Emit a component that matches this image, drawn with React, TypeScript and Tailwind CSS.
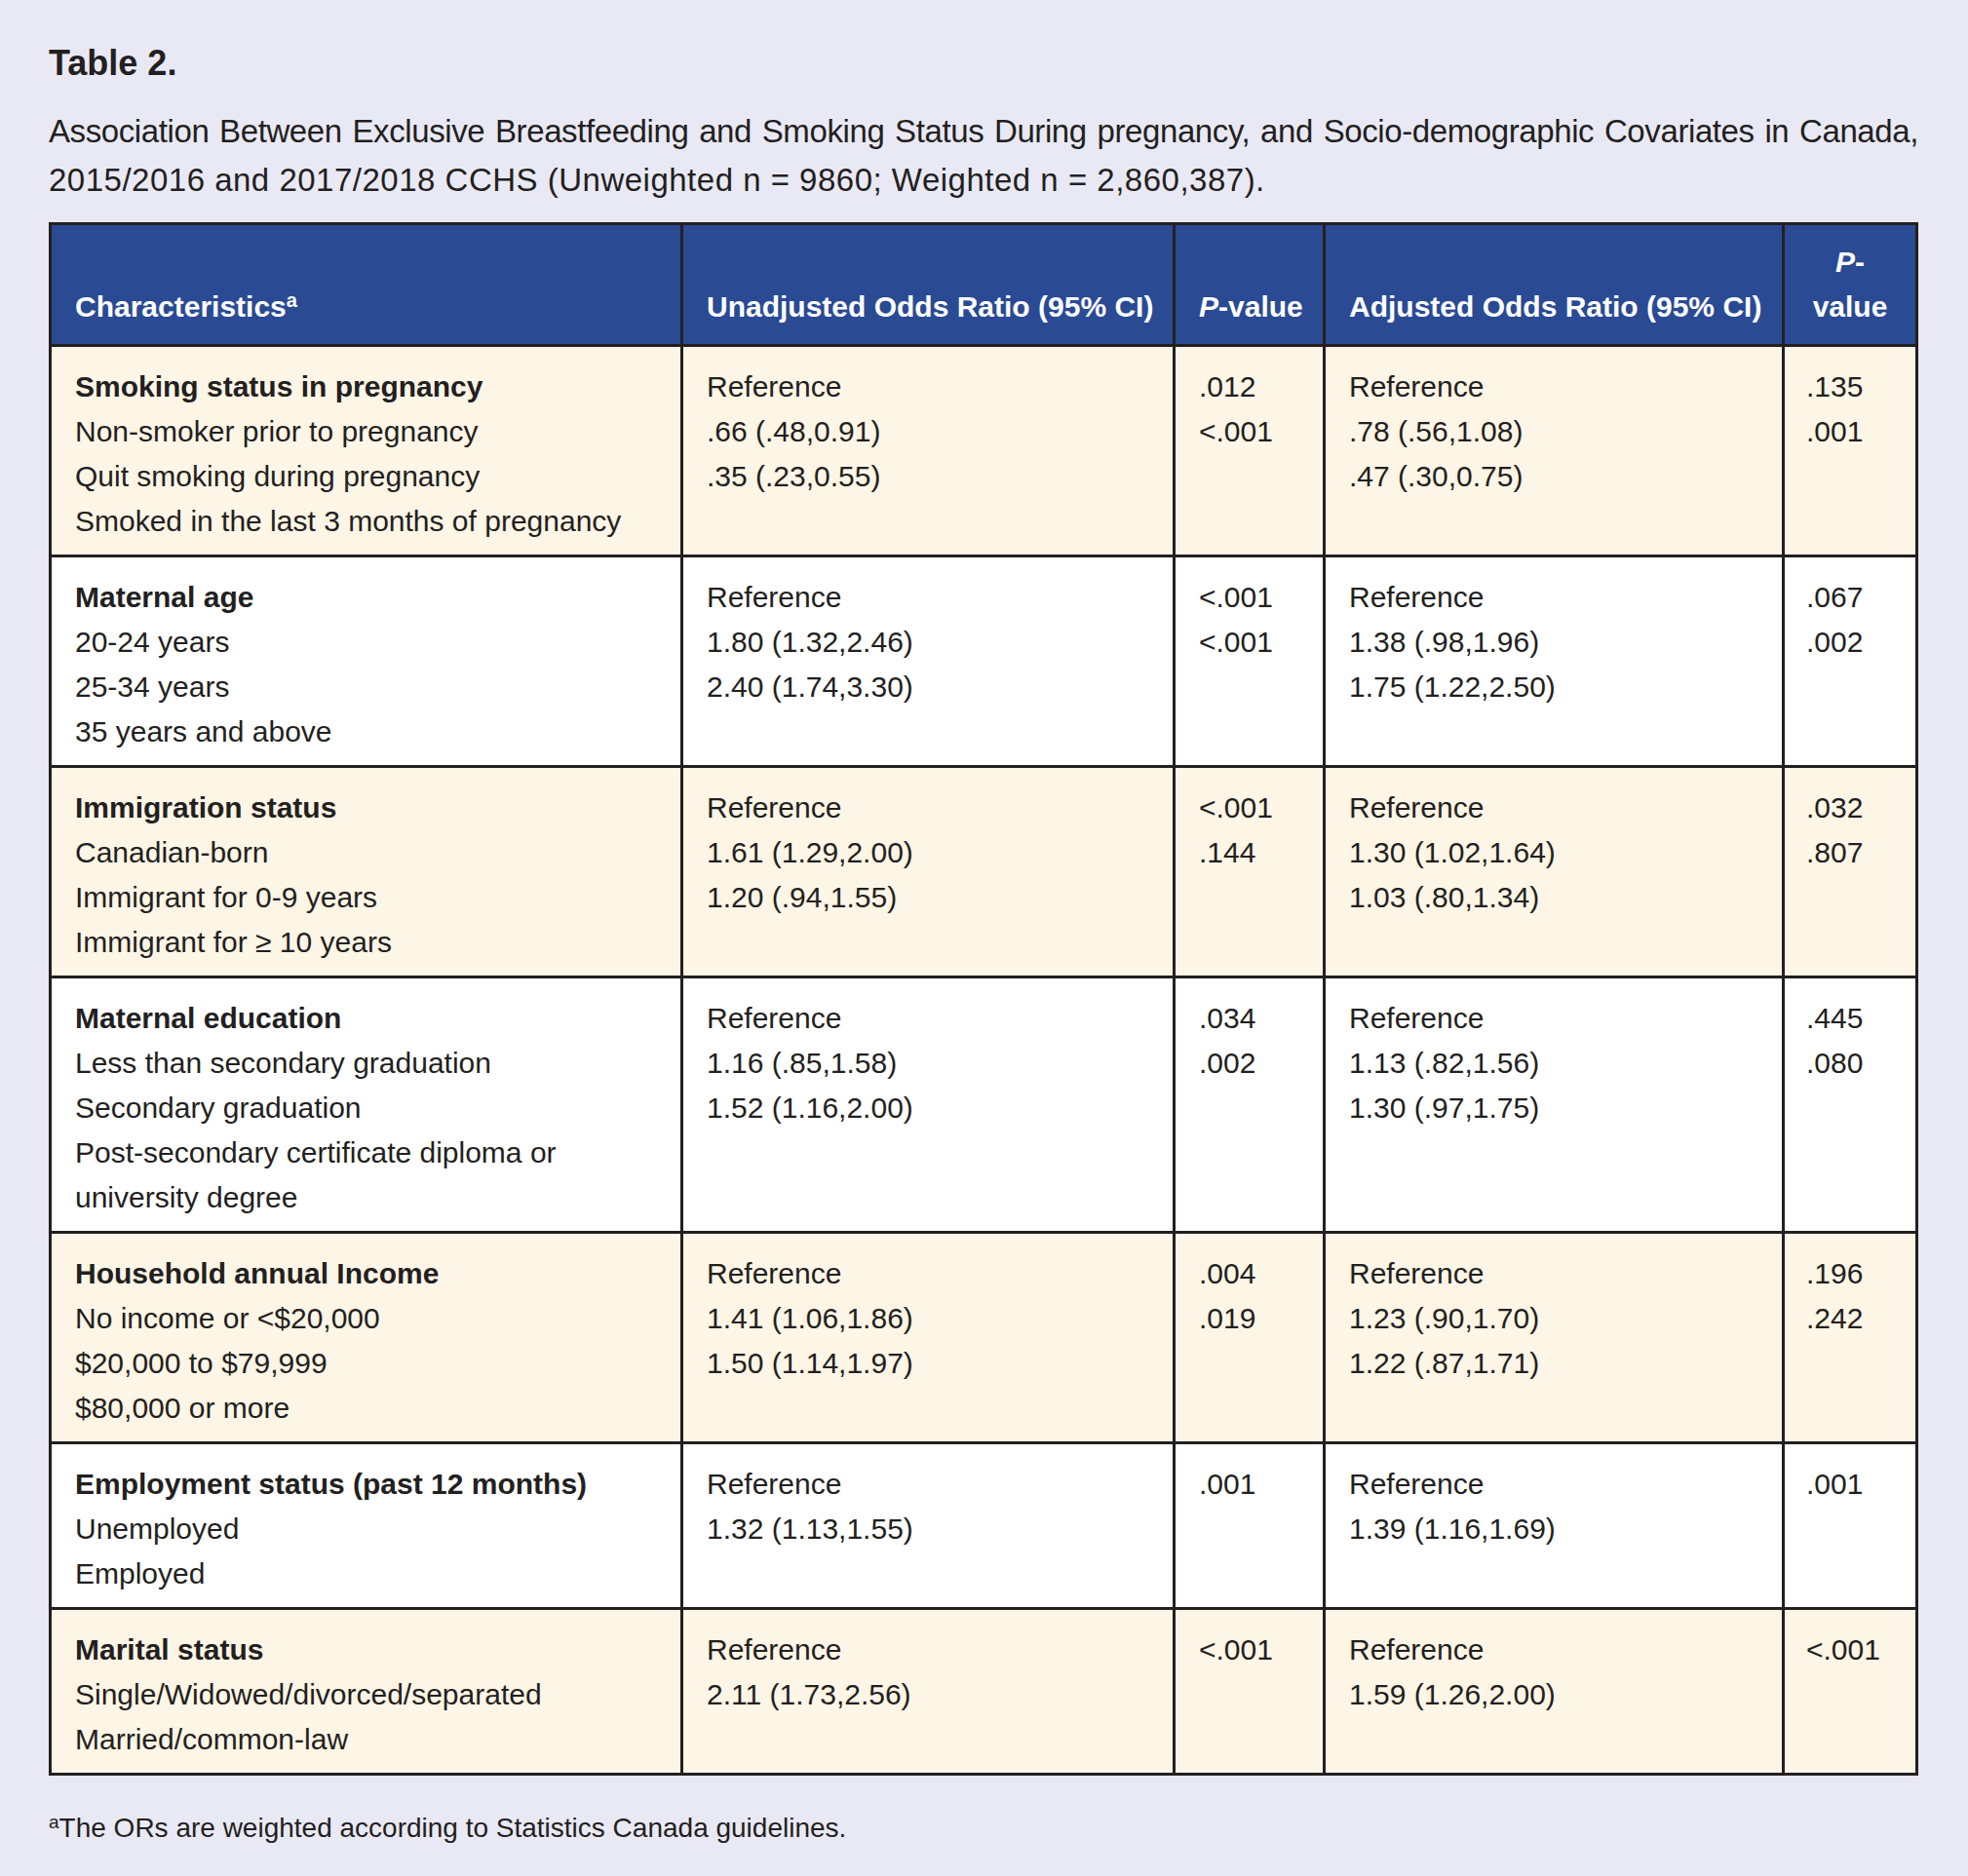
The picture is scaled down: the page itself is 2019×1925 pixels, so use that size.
type Group = {
  title: string;
  items: string[];
  unadjusted: string[];
  pUnadjusted: string[];
  adjusted: string[];
  pAdjusted: string[];
};

const groups: Group[] = [
  {
    title: "Smoking status in pregnancy",
    items: ["Non-smoker prior to pregnancy", "Quit smoking during pregnancy", "Smoked in the last 3 months of pregnancy"],
    unadjusted: ["Reference", ".66 (.48,0.91)", ".35 (.23,0.55)"],
    pUnadjusted: [".012", "<.001"],
    adjusted: ["Reference", ".78 (.56,1.08)", ".47 (.30,0.75)"],
    pAdjusted: [".135", ".001"],
  },
  {
    title: "Maternal age",
    items: ["20-24 years", "25-34 years", "35 years and above"],
    unadjusted: ["Reference", "1.80 (1.32,2.46)", "2.40 (1.74,3.30)"],
    pUnadjusted: ["<.001", "<.001"],
    adjusted: ["Reference", "1.38 (.98,1.96)", "1.75 (1.22,2.50)"],
    pAdjusted: [".067", ".002"],
  },
  {
    title: "Immigration status",
    items: ["Canadian-born", "Immigrant for 0-9 years", "Immigrant for \u2265 10 years"],
    unadjusted: ["Reference", "1.61 (1.29,2.00)", "1.20 (.94,1.55)"],
    pUnadjusted: ["<.001", ".144"],
    adjusted: ["Reference", "1.30 (1.02,1.64)", "1.03 (.80,1.34)"],
    pAdjusted: [".032", ".807"],
  },
  {
    title: "Maternal education",
    items: ["Less than secondary graduation", "Secondary graduation", "Post-secondary certificate diploma or university degree"],
    unadjusted: ["Reference", "1.16 (.85,1.58)", "1.52 (1.16,2.00)"],
    pUnadjusted: [".034", ".002"],
    adjusted: ["Reference", "1.13 (.82,1.56)", "1.30 (.97,1.75)"],
    pAdjusted: [".445", ".080"],
  },
  {
    title: "Household annual Income",
    items: ["No income or <$20,000", "$20,000 to $79,999", "$80,000 or more"],
    unadjusted: ["Reference", "1.41 (1.06,1.86)", "1.50 (1.14,1.97)"],
    pUnadjusted: [".004", ".019"],
    adjusted: ["Reference", "1.23 (.90,1.70)", "1.22 (.87,1.71)"],
    pAdjusted: [".196", ".242"],
  },
  {
    title: "Employment status (past 12 months)",
    items: ["Unemployed", "Employed"],
    unadjusted: ["Reference", "1.32 (1.13,1.55)"],
    pUnadjusted: [".001"],
    adjusted: ["Reference", "1.39 (1.16,1.69)"],
    pAdjusted: [".001"],
  },
  {
    title: "Marital status",
    items: ["Single/Widowed/divorced/separated", "Married/common-law"],
    unadjusted: ["Reference", "2.11 (1.73,2.56)"],
    pUnadjusted: ["<.001"],
    adjusted: ["Reference", "1.59 (1.26,2.00)"],
    pAdjusted: ["<.001"],
  },
];

const rowGrid = "grid grid-cols-[645px_505px_154px_471px_137px]";
const cell = "border-l-[3px] border-[#231f20] pl-[24px] pr-[12px] pt-[18px] pb-[11px]";
const headCell = "flex flex-col justify-end border-l-[3px] border-[#231f20] px-[24px] py-[15px] whitespace-nowrap";

function Lines({ values }: { values: string[] }) {
  return (
    <>
      {values.map((v, i) => (
        <div key={i}>{v}</div>
      ))}
    </>
  );
}

export default function App() {
  return (
    <div className="min-h-screen w-full bg-[#e9e9f5] px-[50px] pt-[45px] pb-[20px] font-['Liberation_Sans',Arial,sans-serif] text-[#231f20]">
      <div className="w-[1918px]">
        <h1 className="text-[36px] font-bold leading-[40px]">Table 2.</h1>

        <div className="mt-[25px] text-[33px] leading-[50px]">
          <p className="text-justify [text-align-last:justify] tracking-[-0.4px]">
            Association Between Exclusive Breastfeeding and Smoking Status During pregnancy, and Socio-demographic Covariates in Canada,
          </p>
          <p className="tracking-[0.5px]">
            2015/2016 and 2017/2018 CCHS (Unweighted n = 9860; Weighted n = 2,860,387).
          </p>
        </div>

        <div className="mt-[18px] border-[3px] border-[#231f20] text-[30px] leading-[46px]">
          <div className={`${rowGrid} bg-[#2a4a94] font-bold text-white`}>
            <div className="flex flex-col justify-end px-[24px] py-[15px]">
              <div>
                Characteristics<sup className="text-[20px]">a</sup>
              </div>
            </div>
            <div className={headCell}>Unadjusted Odds Ratio (95% CI)</div>
            <div className={headCell}>
              <div>
                <i>P</i>-value
              </div>
            </div>
            <div className={headCell}>Adjusted Odds Ratio (95% CI)</div>
            <div className="flex flex-col justify-end border-l-[3px] border-[#231f20] py-[15px] text-center">
              <div>
                <i>P</i>-
              </div>
              <div>value</div>
            </div>
          </div>

          {groups.map((g, i) => (
            <div
              key={g.title}
              className={`${rowGrid} border-t-[3px] border-[#231f20] ${i % 2 === 0 ? "bg-[#fdf5e6]" : "bg-white"}`}
            >
              <div className="pl-[24px] pr-[20px] pt-[18px] pb-[11px]">
                <div className="font-bold">{g.title}</div>
                <Lines values={g.items} />
              </div>
              <div className={cell}>
                <Lines values={g.unadjusted} />
              </div>
              <div className={cell}>
                <Lines values={g.pUnadjusted} />
              </div>
              <div className={cell}>
                <Lines values={g.adjusted} />
              </div>
              <div className="border-l-[3px] border-[#231f20] pl-[22px] pt-[18px] pb-[11px]">
                <Lines values={g.pAdjusted} />
              </div>
            </div>
          ))}
        </div>

        <p className="mt-[34px] text-[28px] leading-[40px]">
          <sup className="text-[19px]">a</sup>The ORs are weighted according to Statistics Canada guidelines.
        </p>
      </div>
    </div>
  );
}
